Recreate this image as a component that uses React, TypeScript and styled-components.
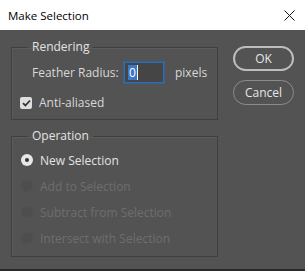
import styled, { createGlobalStyle } from "styled-components";

const GlobalStyle = createGlobalStyle`
  html, body {
    margin: 0;
    padding: 0;
    background: #535353;
  }
  body {
    font-family: "Open Sans", "Noto Sans", sans-serif;
  }
`;

const Window = styled.div`
  width: 305px;
  height: 271px;
  display: flex;
  flex-direction: column;
  overflow: hidden;
`;

const TitleBar = styled.div`
  height: 30px;
  flex: none;
  background: #ffffff;
  display: flex;
  align-items: center;
  justify-content: space-between;
  padding: 0 10px 0 8px;
  font-size: 11.5px;
  color: #000;
`;

const Body = styled.div`
  flex: 1;
  background: #535353;
  border-bottom: 2px solid #2a2a2a;
  display: flex;
  gap: 15px;
  padding: 9px 11px 0 11px;
  color: #d8d8d8;
  font-size: 12px;
`;

const LeftColumn = styled.div`
  width: 207px;
  display: flex;
  flex-direction: column;
  gap: 8px;
`;

const Group = styled.fieldset<{ $height: number }>`
  margin: 0;
  padding: 0;
  height: ${(p) => p.$height}px;
  box-sizing: border-box;
  border: 1px solid #3f3f3f;
  box-shadow: inset 1px 1px 0 #5c5c5c;
  min-width: 0;
`;

const Legend = styled.legend`
  margin-left: 16px;
  padding: 0 4px;
  line-height: 16px;
  font-size: 12px;
  color: #e2e2e2;
`;

const FieldRow = styled.div`
  display: flex;
  align-items: center;
  height: 21px;
  margin: 7px 0 0 20px;
`;

const FieldLabel = styled.span`
  width: 92px;
`;

const NumberBox = styled.div`
  width: 40px;
  height: 21px;
  box-sizing: border-box;
  background: #454545;
  border: 1px solid #2f6bb8;
  box-shadow: 0 0 0 1px #3a5f8f;
  display: flex;
  align-items: center;
  padding-left: 3px;
`;

const Selected = styled.span`
  background: #3a78c8;
  color: #fff;
  padding: 0 1px;
  line-height: 15px;
  border-right: 1px solid #fff;
`;

const Unit = styled.span`
  margin-left: 11px;
`;

const CheckRow = styled.label`
  display: flex;
  align-items: center;
  gap: 7px;
  margin: 11px 0 0 8px;
`;

const CheckBox = styled.span`
  width: 12px;
  height: 12px;
  border-radius: 2px;
  background: #dedede;
  display: flex;
  align-items: center;
  justify-content: center;
`;

const RadioList = styled.div`
  display: flex;
  flex-direction: column;
  gap: 6px;
  margin: 6px 0 0 9px;
`;

const RadioRow = styled.div<{ $disabled?: boolean }>`
  display: flex;
  align-items: center;
  gap: 7px;
  height: 20px;
  color: ${(p) => (p.$disabled ? "#6e6e6e" : "#e2e2e2")};
`;

const RadioDot = styled.span<{ $on?: boolean }>`
  width: 12px;
  height: 12px;
  border-radius: 50%;
  box-sizing: border-box;
  background: ${(p) => (p.$on ? "#e6e6e6" : "#4e4e4e")};
  border: ${(p) => (p.$on ? "none" : "1px solid #505050")};
  display: flex;
  align-items: center;
  justify-content: center;
  &::after {
    content: "";
    width: 4px;
    height: 4px;
    border-radius: 50%;
    background: ${(p) => (p.$on ? "#333" : "transparent")};
  }
`;

const RightColumn = styled.div`
  width: 61px;
  display: flex;
  flex-direction: column;
  gap: 9px;
  padding-top: 7px;
`;

const Button = styled.button<{ $primary?: boolean }>`
  height: 25px;
  width: 61px;
  border-radius: 13px;
  background: #535353;
  border: ${(p) => (p.$primary ? "2px solid #bdbdbd" : "1px solid #8c8c8c")};
  color: #e6e6e6;
  font-family: "Open Sans", "Noto Sans", sans-serif;
  font-size: 12px;
  padding: 0;
`;

const options = [
  { label: "New Selection", on: true },
  { label: "Add to Selection", disabled: true },
  { label: "Subtract from Selection", disabled: true },
  { label: "Intersect with Selection", disabled: true },
];

export default function App() {
  return (
    <Window>
      <GlobalStyle />
      <TitleBar>
        <span>Make Selection</span>
        <svg width="11" height="11" viewBox="0 0 11 11">
          <path d="M0.5 0.5L10.5 10.5M10.5 0.5L0.5 10.5" stroke="#111" strokeWidth="1" />
        </svg>
      </TitleBar>
      <Body>
        <LeftColumn>
          <Group $height={81}>
            <Legend>Rendering</Legend>
            <FieldRow>
              <FieldLabel>Feather Radius:</FieldLabel>
              <NumberBox>
                <Selected>0</Selected>
              </NumberBox>
              <Unit>pixels</Unit>
            </FieldRow>
            <CheckRow>
              <CheckBox>
                <svg width="9" height="8" viewBox="0 0 9 8">
                  <path d="M1 4.2L3.4 6.5L8 1.5" stroke="#333" strokeWidth="1.8" fill="none" />
                </svg>
              </CheckBox>
              Anti-aliased
            </CheckRow>
          </Group>
          <Group $height={129}>
            <Legend>Operation</Legend>
            <RadioList>
              {options.map((o) => (
                <RadioRow key={o.label} $disabled={o.disabled}>
                  <RadioDot $on={o.on} />
                  {o.label}
                </RadioRow>
              ))}
            </RadioList>
          </Group>
        </LeftColumn>
        <RightColumn>
          <Button $primary>OK</Button>
          <Button>Cancel</Button>
        </RightColumn>
      </Body>
    </Window>
  );
}
